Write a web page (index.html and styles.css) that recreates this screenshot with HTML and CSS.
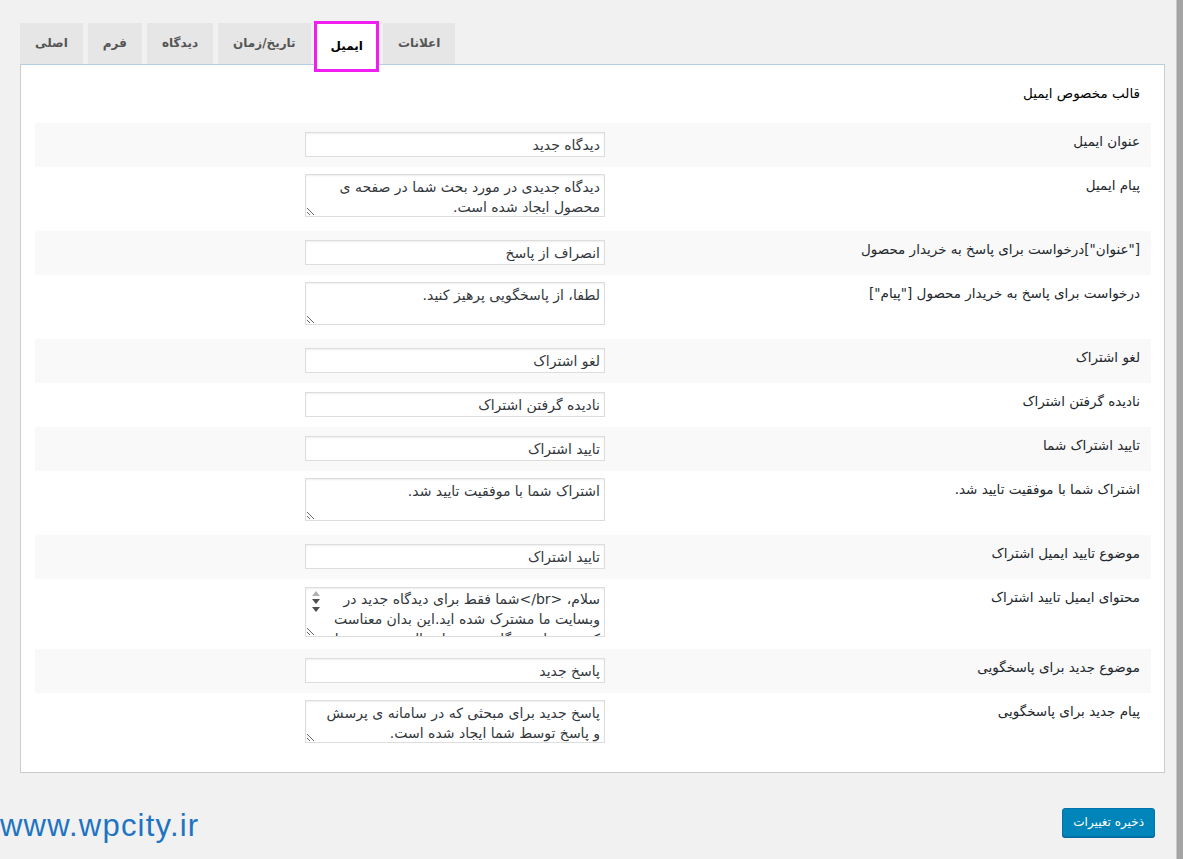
FILE: index.html
```html
<!DOCTYPE html>
<html lang="fa">
<head>
<meta charset="utf-8">
<title>تنظیمات ایمیل</title>
<link rel="stylesheet" href="styles.css">
</head>
<body>
<div class="page">
  <div class="main">
    <nav class="tabs">
      <a class="tab">اصلی</a>
      <a class="tab">فرم</a>
      <a class="tab">دیدگاه</a>
      <a class="tab">تاریخ/زمان</a>
      <a class="tab active">ایمیل</a>
      <a class="tab">اعلانات</a>
    </nav>
    <div class="panel" dir="rtl">
      <h3 class="title">قالب مخصوص ایمیل</h3>
      <div class="rows">
        <div class="row odd"><div class="label">عنوان ایمیل</div><div class="field"><input class="text" type="text" value="دیدگاه جدید"></div></div>
        <div class="row area"><div class="label">پیام ایمیل</div><div class="field"><textarea class="box">دیدگاه جدیدی در مورد بحث شما در صفحه ی محصول ایجاد شده است.</textarea></div></div>
        <div class="row odd"><div class="label">["عنوان"]درخواست برای پاسخ به خریدار محصول</div><div class="field"><input class="text" type="text" value="انصراف از پاسخ"></div></div>
        <div class="row area"><div class="label">درخواست برای پاسخ به خریدار محصول ["پیام"]</div><div class="field"><textarea class="box">لطفا، از پاسخگویی پرهیز کنید.</textarea></div></div>
        <div class="row odd"><div class="label">لغو اشتراک</div><div class="field"><input class="text" type="text" value="لغو اشتراک"></div></div>
        <div class="row"><div class="label">نادیده گرفتن اشتراک</div><div class="field"><input class="text" type="text" value="نادیده گرفتن اشتراک"></div></div>
        <div class="row odd"><div class="label">تایید اشتراک شما</div><div class="field"><input class="text" type="text" value="تایید اشتراک"></div></div>
        <div class="row area"><div class="label">اشتراک شما با موفقیت تایید شد.</div><div class="field"><textarea class="box">اشتراک شما با موفقیت تایید شد.</textarea></div></div>
        <div class="row odd"><div class="label">موضوع تایید ایمیل اشتراک</div><div class="field"><input class="text" type="text" value="تایید اشتراک"></div></div>
        <div class="row area tall"><div class="label">محتوای ایمیل تایید اشتراک</div><div class="field scrollwrap"><textarea class="box scroll">سلام، &lt;br/&gt;شما فقط برای دیدگاه جدید در وبسایت ما مشترک شده اید.این بدان معناست که هر زمان دیدگاه جدیدی ارسال شود به شما اطلاع داده خواهد شد.</textarea><span class="spin"><i class="arrow up"></i><i class="arrow down"></i><i class="arrow down"></i></span></div></div>
        <div class="row odd"><div class="label">موضوع جدید برای پاسخگویی</div><div class="field"><input class="text" type="text" value="پاسخ جدید"></div></div>
        <div class="row area"><div class="label">پیام جدید برای پاسخگویی</div><div class="field"><textarea class="box">پاسخ جدید برای مبحثی که در سامانه ی پرسش و پاسخ توسط شما ایجاد شده است.</textarea></div></div>
      </div>
    </div>
    <div class="footer">
      <span class="watermark">www.wpcity.ir</span>
      <button class="save" type="button">ذخیره تغییرات</button>
    </div>
  </div>
  <div class="edge"></div>
</div>
</body>
</html>
```

FILE: styles.css
```css
html, body {
  margin: 0;
  padding: 0;
  background: #f1f1f1;
}

body {
  font-family: Tahoma, "DejaVu Sans", sans-serif;
  font-size: 12px;
  color: #23282d;
}

.page {
  display: flex;
  width: 1183px;
  height: 859px;
  overflow: hidden;
}

.main {
  flex: 1;
  display: flex;
  flex-direction: column;
  padding-top: 22px;
}

.edge {
  width: 6px;
  background: #a4a4a4;
  border-left: 1px solid #c8c8c8;
}

.tabs {
  display: flex;
  gap: 5px;
  margin-left: 20px;
  height: 42px;
  align-items: flex-end;
}

.tab {
  position: relative;
  display: flex;
  align-items: center;
  justify-content: center;
  height: 41px;
  box-sizing: border-box;
  padding: 0 15px 2px;
  background: #e6e6e6;
  color: #555;
  font-weight: bold;
  font-size: 12px;
  direction: rtl;
  white-space: nowrap;
}

.tab.active {
  background: #fff;
  color: #000;
  height: 43px;
  margin-bottom: -1px;
  z-index: 2;
  padding-top: 6px;
}

.tab.active::after {
  content: "";
  position: absolute;
  left: -2px;
  right: -1px;
  top: -1px;
  bottom: -7px;
  border: 3px solid #f01ef0;
}

.panel {
  margin-left: 20px;
  margin-right: 11px;
  background: #fff;
  border: 1px solid #cccccc;
  border-top-color: #b5cfdf;
  padding: 0 13px 15px 14px;
}

.title {
  margin: 18px 11px 20px 0;
  font-size: 13.5px;
  font-weight: normal;
  line-height: 20px;
  color: #000;
}

.rows {
  display: flex;
  flex-direction: column;
}

.row {
  display: flex;
  height: 44px;
  background: #fff;
}

.row.odd {
  background: #f9f9f9;
}

.row.area {
  height: 64px;
}

.row.tall {
  height: 70px;
}

.label {
  width: 536px;
  box-sizing: border-box;
  padding: 9px 11px 0 0;
  line-height: 18px;
  font-size: 13.5px;
  color: #23282d;
  white-space: nowrap;
}

.field {
  padding: 9px 10px 0 0;
}

.row.area .field {
  padding-top: 7px;
}

.row.tall .field {
  padding-top: 8px;
}

.scrollwrap {
  position: relative;
}

.text,
.box {
  display: block;
  width: 300px;
  box-sizing: border-box;
  margin: 0;
  border: 1px solid #ddd;
  box-shadow: inset 0 1px 2px rgba(0, 0, 0, 0.07);
  background: #fff;
  color: #32373c;
  font-family: Tahoma, "DejaVu Sans", sans-serif;
  font-size: 14px;
  outline: none;
}

.text {
  height: 25px;
  padding: 0 4px;
}

.box {
  height: 43px;
  padding: 2px 4px 0 10px;
  line-height: 20px;
  resize: vertical;
  overflow: hidden;
}

.box.scroll {
  height: 50px;
  padding: 1px 4px 0 22px;
}

.spin {
  position: absolute;
  left: 5px;
  top: 12px;
  display: flex;
  flex-direction: column;
  align-items: center;
  gap: 3px;
  width: 12px;
}

.arrow {
  display: block;
  width: 0;
  height: 0;
  border-left: 4px solid transparent;
  border-right: 4px solid transparent;
}

.arrow.up {
  border-bottom: 5px solid #b0b0b0;
}

.arrow.down {
  border-top: 5px solid #505050;
}

.footer {
  display: flex;
  justify-content: space-between;
  align-items: flex-start;
  margin-top: 35px;
  padding-right: 21px;
}

.watermark {
  font-family: "Liberation Sans", Arial, sans-serif;
  font-size: 31px;
  line-height: 34px;
  color: #1e74c2;
  margin-top: 1px;
  letter-spacing: 1.2px;
}

.save {
  height: 29px;
  padding: 0 10px 2px;
  background: #0085ba;
  border: 1px solid #0073aa;
  border-radius: 3px;
  box-shadow: 0 1px 0 #006799;
  color: #fff;
  font-family: Tahoma, "DejaVu Sans", sans-serif;
  font-size: 12px;
  direction: rtl;
}
```
